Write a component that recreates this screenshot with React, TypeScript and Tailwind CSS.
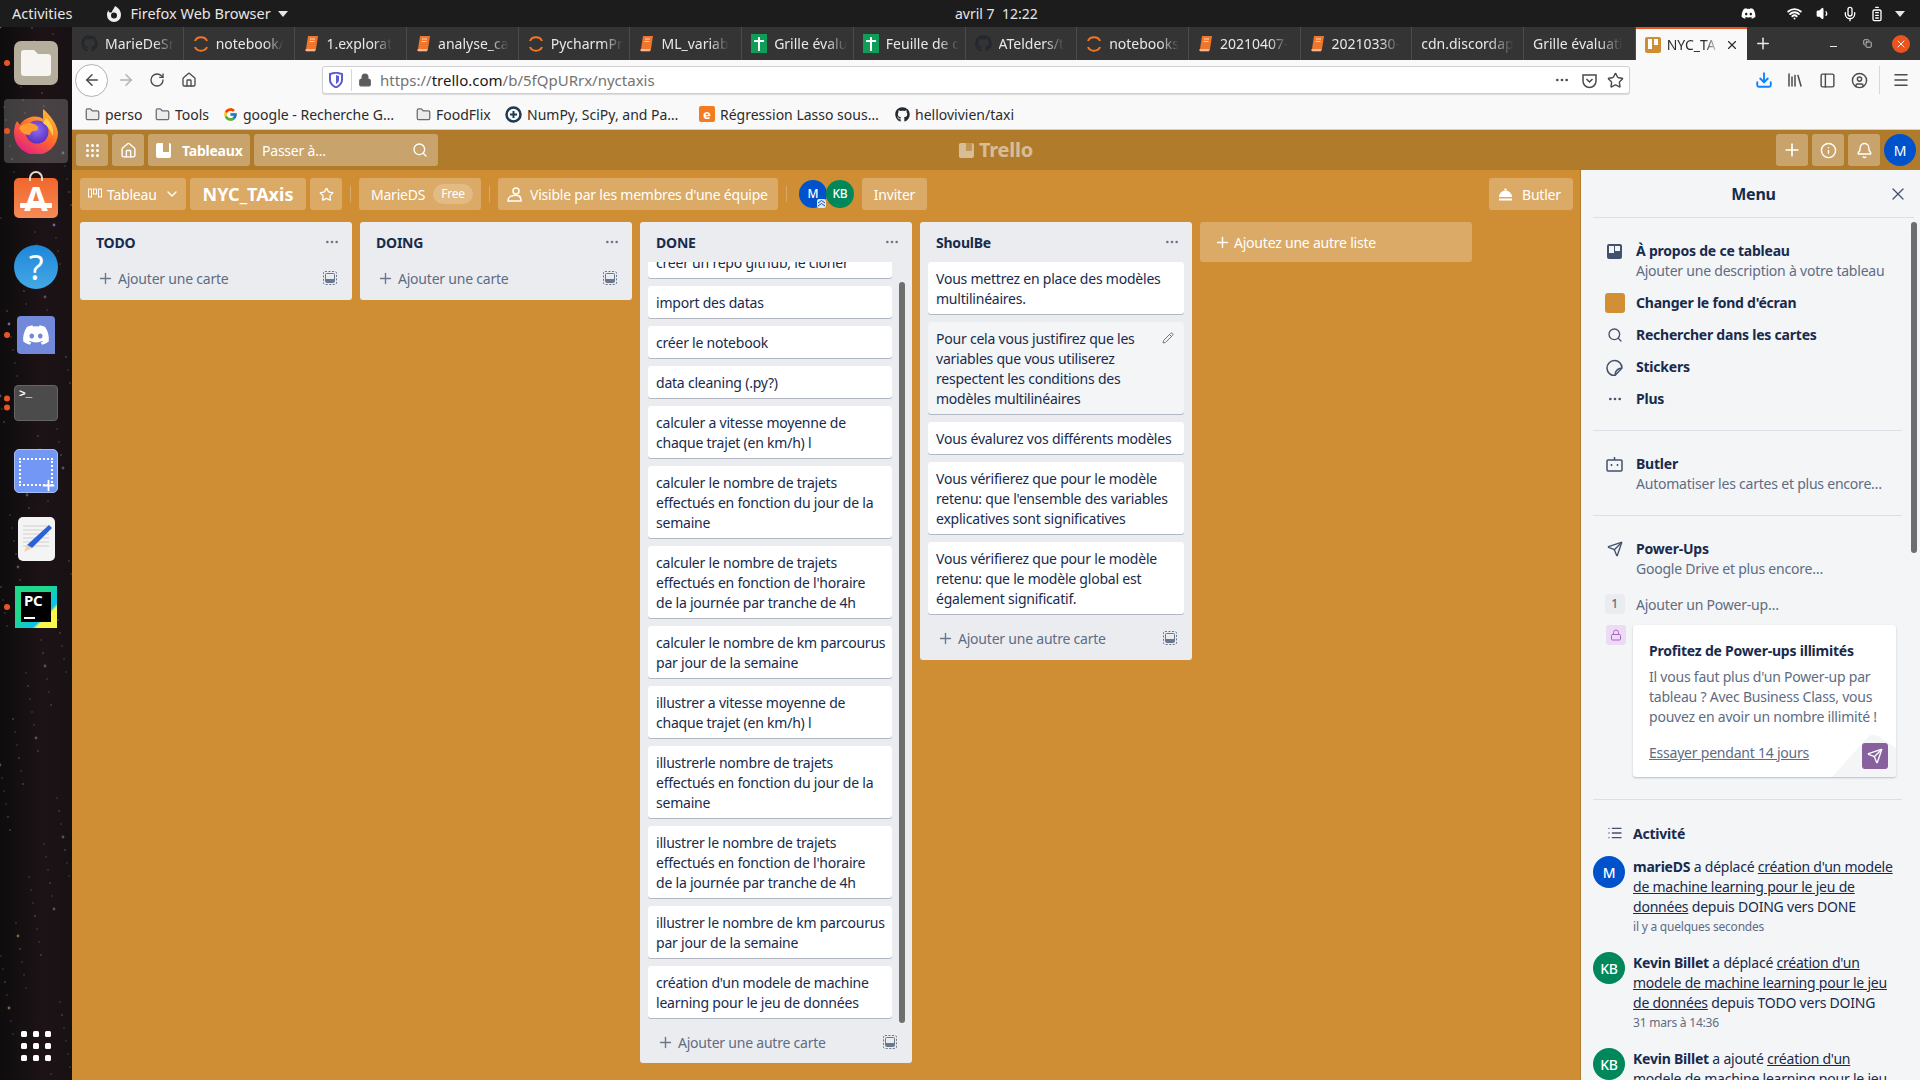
import {
  ArrowLeft, ArrowRight, Bell, ChevronDown, Copy, Ellipsis, Home, Info, Lock, Menu as MenuIcon, Pencil, Plus,
  RotateCw, Search, Send, Star, Volume1, Wifi, X, Mic, BatteryFull, CircleUser, Folder, Download, PanelLeft, Library, List,
} from 'lucide-react';
import { FaDiscord, FaGithub } from 'react-icons/fa6';
import { FcGoogle } from 'react-icons/fc';

const JupyterIcon = () => (
  <svg width="16" height="18" viewBox="0 0 16 18" className="shrink-0" fill="none" stroke="#f37626" strokeWidth="2">
    <path d="M2 6 C4 1 12 1 14 6" />
    <path d="M2 12 C4 17 12 17 14 12" />
  </svg>
);

const BookIcon = () => (
  <svg width="15" height="17" viewBox="0 0 15 17" className="shrink-0">
    <path d="M4 1h10l-2 13H2z" fill="#f0752d" />
    <path d="M2 14c-1 2 0 2 1 2h8l.5-2z" fill="#fff" stroke="#f0752d" />
    <path d="M6 4h5M5.500 6.500h5" stroke="#ffd2b0" />
  </svg>
);

const SheetIcon = () => (
  <span className="relative h-[19px] w-4 shrink-0 bg-[#0f9d58]">
    <span className="absolute left-[7px] top-[3px] h-[14px] w-0.5 bg-white" />
    <span className="absolute left-[3px] top-[6px] h-0.5 w-[10px] bg-white" />
  </span>
);

const GithubDark = () => <FaGithub className="h-[17px] w-[17px] shrink-0 text-[#23282e]" />;

const BookmarkFolder = () => <Folder className="h-[15px] w-[15px] fill-[#ececec] text-[#6b6b6b]" />;

const TemplateIcon = () => (
  <svg width="14" height="14" viewBox="0 0 14 14" className="ml-auto shrink-0" fill="none" stroke="#6b778c">
    <rect x="0.500" y="0.500" width="13" height="13" rx="1.500" strokeDasharray="2 1.500" />
    <rect x="2.500" y="2.500" width="9" height="9" rx="1" />
    <rect x="3" y="8" width="8" height="3" fill="#6b778c" stroke="none" />
  </svg>
);

const tabs = [
  { title: 'MarieDeSr', icon: <GithubDark /> },
  { title: 'notebook/', icon: <JupyterIcon /> },
  { title: '1.explorat', icon: <BookIcon /> },
  { title: 'analyse_ca', icon: <BookIcon /> },
  { title: 'PycharmPr', icon: <JupyterIcon /> },
  { title: 'ML_variab', icon: <BookIcon /> },
  { title: 'Grille évalu', icon: <SheetIcon /> },
  { title: 'Feuille de c', icon: <SheetIcon /> },
  { title: 'ATelders/t', icon: <GithubDark /> },
  { title: 'notebooks', icon: <JupyterIcon /> },
  { title: '20210407-', icon: <BookIcon /> },
  { title: '20210330-', icon: <BookIcon /> },
  { title: 'cdn.discordap', icon: null },
  { title: 'Grille évaluati', icon: null },
];

const bookmarks = [
  { label: 'perso', width: 'w-[70px]', icon: <BookmarkFolder /> },
  { label: 'Tools', width: 'w-[68px]', icon: <BookmarkFolder /> },
  { label: 'google - Recherche G…', width: 'w-[193px]', icon: <FcGoogle className="h-[15px] w-[15px]" /> },
  { label: 'FoodFlix', width: 'w-[89px]', icon: <BookmarkFolder /> },
  {
    label: 'NumPy, SciPy, and Pa…',
    width: 'w-[194px]',
    icon: (
      <svg width="17" height="17" viewBox="0 0 17 17">
        <circle cx="8.500" cy="8.500" r="7" fill="none" stroke="#1b3a55" strokeWidth="2.500" />
        <path d="M5 8.500h7M8.500 5v7" stroke="#1b3a55" strokeWidth="2" />
      </svg>
    ),
  },
  {
    label: 'Régression Lasso sous…',
    width: 'w-[196px]',
    icon: <span className="flex h-4 w-4 items-center justify-center rounded-[2px] bg-[#f47b20] text-[13px] font-bold leading-none text-white">e</span>,
  },
  { label: 'hellovivien/taxi', width: 'w-[130px]', icon: <FaGithub className="h-[15px] w-[15px] text-[#24292e]" /> },
];

const doneCards = [
  'créer un repo github, le cloner',
  'import des datas',
  'créer le notebook',
  'data cleaning (.py?)',
  'calculer a vitesse moyenne de\nchaque trajet (en km/h) l',
  'calculer le nombre de trajets\neffectués en fonction du jour de la\nsemaine',
  "calculer le nombre de trajets\neffectués en fonction de l'horaire\nde la journée par tranche de 4h",
  'calculer le nombre de km parcourus\npar jour de la semaine',
  'illustrer a vitesse moyenne de\nchaque trajet (en km/h) l',
  'illustrerle nombre de trajets\neffectués en fonction du jour de la\nsemaine',
  "illustrer le nombre de trajets\neffectués en fonction de l'horaire\nde la journée par tranche de 4h",
  'illustrer le nombre de km parcourus\npar jour de la semaine',
  "création d'un modele de machine\nlearning pour le jeu de données",
];

const shouldBeCards = [
  'Vous mettrez en place des modèles\nmultilinéaires.',
  'Pour cela vous justifirez que les\nvariables que vous utiliserez\nrespectent les conditions des\nmodèles multilinéaires',
  'Vous évalurez vos différents modèles',
  "Vous vérifierez que pour le modèle\nretenu: que l'ensemble des variables\nexplicatives sont significatives",
  'Vous vérifierez que pour le modèle\nretenu: que le modèle global est\négalement significatif.',
];

// fixed star field for the dock wallpaper
const stars = Array.from({ length: 170 }).map((_, i) => ({
  x: (i * 47) % 72,
  y: 27 + ((i * 283) % 1053),
  r: i % 9 === 0 ? 1.4 : 0.7,
  c: i % 5 === 0 ? '#8f8fd0' : i % 7 === 0 ? '#b08a60' : '#6d6d80',
}));

const AppSlot = ({ children, dots = 0, active = false }: { children: React.ReactNode; dots?: number; active?: boolean }) => (
  <div className="relative flex h-[68px] w-[72px] items-center justify-center">
    {active && <div className="absolute inset-x-1 inset-y-[2px] rounded-[4px] bg-white/20" />}
    {dots > 0 && (
      <div className="absolute left-1 top-1/2 flex -translate-y-1/2 flex-col gap-[3px]">
        {Array.from({ length: dots }).map((_, i) => (
          <span key={i} className="h-[6px] w-[6px] rounded-full bg-[#e95420]" />
        ))}
      </div>
    )}
    <div className="relative">{children}</div>
  </div>
);

const Dock = () => (
  <aside className="relative flex w-[72px] shrink-0 flex-col overflow-hidden bg-[linear-gradient(90deg,#0e0c0d,#1d1316_60%,#171113)] pt-[2px]">
    <svg className="absolute inset-0 h-full w-full" viewBox="0 27 72 1053" preserveAspectRatio="none">
      {stars.map((s, i) => (
        <circle key={i} cx={s.x} cy={s.y} r={s.r} fill={s.c} opacity="0.7" />
      ))}
    </svg>
    <AppSlot dots={1}>
      <div className="flex h-11 w-11 items-center justify-center rounded-[7px] bg-[#b5ae9c]">
        <svg width="32" height="28" viewBox="0 0 32 28">
          <path d="M1 4a3 3 0 0 1 3-3h10l4 4h10a3 3 0 0 1 3 3v16a3 3 0 0 1-3 3H4a3 3 0 0 1-3-3z" fill="#f7f5f1" />
        </svg>
      </div>
    </AppSlot>
    <AppSlot dots={1} active>
      <svg width="46" height="46" viewBox="0 0 46 46">
        <defs>
          <linearGradient id="ffBody" x1="0.8" y1="0" x2="0.2" y2="1">
            <stop offset="0" stopColor="#ffbd3a" />
            <stop offset="0.5" stopColor="#ff6a2b" />
            <stop offset="1" stopColor="#e3178a" />
          </linearGradient>
          <radialGradient id="ffCore" cx="0.5" cy="0.4" r="0.6">
            <stop offset="0" stopColor="#8e6cf0" />
            <stop offset="1" stopColor="#5b2fc0" />
          </radialGradient>
        </defs>
        <path d="M30 1c6 5 14 14 15 24a22 22 0 1 1-44 0c0-5 1-9 3-12l3 4c3-5 7-7 11-8 5-1 10 0 12 2 0-3 0-7 0-10z" fill="url(#ffBody)" />
        <circle cx="24" cy="24" r="11.500" fill="url(#ffCore)" />
        <path d="M6 20c4-5 10-6 15-4 6 2 5 7 0 7-2 0-4 2-4 4-6 0-9-3-11-7z" fill="#ff9a2e" />
        <path d="M33 10c5 4 8 10 7 18-2-5-5-10-10-13z" fill="#ffcf45" />
      </svg>
    </AppSlot>
    <AppSlot>
      <div className="relative -mt-[2px] flex h-[40px] w-11 flex-col items-center rounded-[5px] bg-[linear-gradient(#f1662b,#f58a58)] text-white">
        <span className="absolute -top-[7px] h-[10px] w-[14px] rounded-t-full border-2 border-b-0 border-[#e9d7c8]" />
        <span className="mt-[1px] text-[34px] font-bold leading-[38px]">A</span>
        <span className="absolute bottom-[10px] h-[5px] w-[32px] rounded-[1px] bg-white" />
      </div>
    </AppSlot>
    <AppSlot>
      <div className="flex h-11 w-11 items-center justify-center rounded-full bg-[linear-gradient(#1f86d8,#43a9e6)] text-[34px] leading-none text-white">?</div>
    </AppSlot>
    <AppSlot dots={1}>
      <div className="relative flex h-[38px] w-[38px] items-center justify-center rounded-[4px] rounded-br-none bg-[#7289da]">
        <FaDiscord className="h-7 w-7 text-white" />
      </div>
    </AppSlot>
    <AppSlot dots={2}>
      <div className="flex h-[36px] w-11 rounded-[4px] border border-[#656565] bg-[#4b4b4b] pl-1 pt-[2px] font-['Liberation_Mono',monospace] text-[11px] font-bold leading-3 text-white">
        &gt;_
      </div>
    </AppSlot>
    <AppSlot>
      <div className="relative h-11 w-11 rounded-[5px] border border-[#a9bdf5] bg-[#7297f5]">
        <div className="absolute inset-x-1 top-2 bottom-[6px] border-2 border-dotted border-white" />
        <Plus className="absolute -bottom-[2px] right-0 h-[17px] w-[17px] text-white" strokeWidth={2.500} />
      </div>
    </AppSlot>
    <AppSlot>
      <div className="flex h-11 w-[37px] items-center justify-center rounded-[5px] bg-[#f4f4f4]">
        <svg width="32" height="36" viewBox="0 0 32 36">
          <path d="M3 5h26M3 9h26M3 13h26M3 17h26M3 21h26M3 25h26" stroke="#d0d0d0" />
          <path d="M29 4l3 3-20 20-5-3z" fill="#2a62d9" />
          <path d="M7 24l5 3-8 4z" fill="#f3cfa8" />
        </svg>
      </div>
    </AppSlot>
    <AppSlot dots={1}>
      <div className="relative flex h-[42px] w-[42px] items-center justify-center bg-[linear-gradient(135deg,#21d789_40%,#07c3f2_70%,#fcf84a_75%)]">
        <div className="flex h-[30px] w-[30px] flex-col justify-between bg-black px-[3px] pb-[3px] text-[15px] font-bold leading-[17px] text-white">
          PC
          <span className="h-[2px] w-[11px] bg-white" />
        </div>
      </div>
    </AppSlot>
    <div className="relative mt-auto mb-[19px] ml-[21px] grid w-[30px] grid-cols-3 gap-x-[6px] gap-y-[6px]">
      {Array.from({ length: 9 }).map((_, i) => (
        <span key={i} className="h-[6px] w-[6px] rounded-[1.5px] bg-white" />
      ))}
    </div>
  </aside>
);

const TopBar = () => (
  <div className="relative flex h-[27px] items-center bg-[#1c1c1c] text-[14.5px] tracking-normal text-[#e6e6e6]">
    <span className="ml-3">Activities</span>
    <svg className="ml-[35px]" width="14" height="16" viewBox="0 0 14 16">
      <path d="M8 0c4 2 6 5 6 9a7 7 0 0 1-14 0c0-2 .6-3.500 1.500-5 0 3 2 3 3.500 2C5 4 7 3 8 0z" fill="#eee" />
      <circle cx="7" cy="9.500" r="3" fill="#1c1c1c" />
    </svg>
    <span className="ml-[9px]">Firefox Web Browser</span>
    <span className="ml-[7px] h-0 w-0 border-x-[5px] border-t-[6px] border-x-transparent border-t-[#e6e6e6]" />
    <span className="absolute left-[955px] top-[3px] whitespace-pre text-[14px]">avril 7  12:22</span>
    <div className="ml-auto flex items-center">
      <FaDiscord className="mr-[31px] h-[15px] w-[15px] text-white" />
      <Wifi className="mr-[14px] h-[15px] w-[15px] text-white" strokeWidth={3} />
      <Volume1 className="mr-[11px] h-[15px] w-[15px] fill-white text-white" />
      <Mic className="mr-[11px] h-4 w-4 text-white" />
      <BatteryFull className="mr-[10px] h-4 w-4 -rotate-90 text-white" />
      <span className="mr-[15px] h-0 w-0 border-x-[5px] border-t-[6px] border-x-transparent border-t-[#e6e6e6]" />
    </div>
  </div>
);

const TabStrip = () => (
  <div className="flex h-[33px] items-stretch bg-[#343434] text-[14px] tracking-normal text-[#e8e8e8]">
    {tabs.map((t) => (
      <div key={t.title} className="flex w-[111.7px] shrink-0 items-center gap-[7px] border-r border-[#4b4b4b] pl-[9px]">
        {t.icon}
        <span className="overflow-hidden whitespace-nowrap [mask-image:linear-gradient(to_right,black_72%,transparent)]">{t.title}</span>
      </div>
    ))}
    <div className="flex w-[111px] shrink-0 items-center gap-[6px] border-t-2 border-[#e95420] bg-[#f9f9fa] pl-[9px] text-[#2b2b2b]">
      <span className="relative h-4 w-4 shrink-0 rounded-[2px] bg-[#cf8e33]">
        <span className="absolute left-[3px] top-[2px] h-[10px] w-1 bg-white" />
        <span className="absolute left-[9px] top-[2px] h-[6px] w-1 bg-white" />
      </span>
      <span className="w-[52px] overflow-hidden whitespace-nowrap [mask-image:linear-gradient(to_right,black_72%,transparent)]">NYC_TA</span>
      <X className="h-[14px] w-[14px] shrink-0" />
    </div>
    <Plus className="ml-[7px] h-[33px] w-[18px] text-[#e8e8e8]" strokeWidth={2} />
    <div className="ml-auto flex items-center">
      <span className="mt-[6px] mr-[26px] h-px w-[7px] bg-[#e8e8e8]" />
      <Copy className="mr-[20px] h-[9px] w-[9px] text-[#e8e8e8]" />
      <span className="mr-[10px] flex h-[18px] w-[18px] items-center justify-center rounded-full bg-[#e95420]">
        <X className="h-3 w-3 text-white" />
      </span>
    </div>
  </div>
);

const NavBar = () => (
  <div className="flex h-[37px] items-center bg-[#f9f9fa] pt-[3px] tracking-normal text-[#4a4a4f]">
    <span className="ml-[3px] flex h-[33px] w-[33px] items-center justify-center rounded-full border border-[#b1b1b3] bg-white">
      <ArrowLeft className="h-[18px] w-[18px]" />
    </span>
    <ArrowRight className="ml-[9px] h-[18px] w-[18px] text-[#b1b1b3]" />
    <RotateCw className="ml-[14px] h-4 w-4" />
    <Home className="ml-4 h-4 w-4" />
    <div className="ml-[125px] flex h-7 w-[1308px] items-center rounded-[3px] border border-[#d0d0d2] bg-white shadow-[0_1px_1px_#0000001f]">
      <svg className="ml-[6px]" width="14" height="16" viewBox="0 0 14 16">
        <path d="M1 2l6-1.500L13 2v6c0 4-3 6-6 7.500C4 14 1 12 1 8z" fill="none" stroke="#5b5bd6" strokeWidth="2" />
        <path d="M7 3l3 1v4c0 2-1.500 3-3 4z" fill="#5b5bd6" />
      </svg>
      <span className="ml-[8px] h-[22px] w-px bg-[#d7d7db]" />
      <Lock className="ml-[6px] h-[14px] w-[14px] fill-[#5c5c5c] text-[#5c5c5c]" />
      <span className="ml-[8px] text-[15px] text-[#737373]">
        https://<span className="text-[#1a1a1a]">trello.com</span>/b/5fQpURrx/nyctaxis
      </span>
      <Ellipsis className="ml-auto mr-[11px] h-4 w-4" />
      <svg className="mr-[9px]" width="17" height="17" viewBox="0 0 17 17" fill="none" stroke="#4a4a4f" strokeWidth="1.500">
        <path d="M2 3h13v6a6.500 6.500 0 0 1-13 0z" />
        <path d="M5.500 7l3 3 3-3" />
      </svg>
      <Star className="mr-[5px] h-[17px] w-[17px]" />
    </div>
    <div className="ml-[125px] flex items-center">
      <Download className="h-[18px] w-[18px] text-[#0a84ff]" strokeWidth={2.500} />
      <Library className="ml-[13px] h-[18px] w-[18px]" />
      <PanelLeft className="ml-[15px] h-[17px] w-[17px]" />
      <CircleUser className="ml-[15px] h-[17px] w-[17px]" />
      <span className="ml-[11px] h-7 w-px bg-[#d7d7db]" />
      <MenuIcon className="ml-3 h-[18px] w-[18px]" />
    </div>
  </div>
);

const BookmarksBar = () => (
  <div className="flex h-[33px] items-center border-b border-[#cfcfcf] bg-[#f9f9fa] pl-[13px] pt-[2px] text-[14px] tracking-normal text-[#2b2b2b]">
    {bookmarks.map((b) => (
      <div key={b.label} className={`flex shrink-0 items-center gap-[5px] ${b.width}`}>
        {b.icon}
        <span className="whitespace-nowrap">{b.label}</span>
      </div>
    ))}
  </div>
);

const TrelloHeader = () => (
  <div className="relative flex h-10 items-center gap-1 bg-[#b07c2c] px-1 text-white">
    <button className="flex h-8 w-8 items-center justify-center rounded-[3px] bg-white/30">
      <span className="grid grid-cols-3 gap-[2px]">
        {Array.from({ length: 9 }).map((_, i) => (
          <span key={i} className="h-[3px] w-[3px] rounded-full bg-white" />
        ))}
      </span>
    </button>
    <button className="flex h-8 w-8 items-center justify-center rounded-[3px] bg-white/30">
      <Home className="h-[17px] w-[17px]" />
    </button>
    <button className="flex h-8 w-[102px] items-center rounded-[3px] bg-white/30 pl-2 text-[14px] font-bold">
      <span className="relative mr-[11px] h-[15px] w-[15px] rounded-[2px] bg-white">
        <span className="absolute left-[7px] top-0 h-[9px] w-[6px] bg-[#c8a36b]" />
      </span>
      Tableaux
    </button>
    <div className="flex h-8 w-[184px] items-center justify-between rounded-[3px] bg-white/30 pl-2 pr-[10px] text-[14px]">
      <span>Passer à...</span>
      <Search className="h-4 w-4" />
    </div>
    <div className="absolute left-1/2 top-2 flex -translate-x-1/2 items-center gap-[5px] text-[20px] font-bold leading-6 text-white/50">
      <span className="relative h-[15px] w-[15px] rounded-[2px] bg-white/50">
        <span className="absolute left-[7px] top-0 h-[8px] w-[6px] bg-[#b07c2c]/60" />
      </span>
      Trello
    </div>
    <div className="ml-auto flex items-center gap-1">
      <button className="flex h-8 w-8 items-center justify-center rounded-[3px] bg-white/30">
        <Plus className="h-5 w-5" />
      </button>
      <button className="flex h-8 w-8 items-center justify-center rounded-[3px] bg-white/30">
        <Info className="h-[17px] w-[17px]" />
      </button>
      <button className="flex h-8 w-8 items-center justify-center rounded-[3px] bg-white/30">
        <Bell className="h-[17px] w-[17px]" />
      </button>
      <span className="flex h-8 w-8 items-center justify-center rounded-full bg-[#0052cc] text-[14px]">M</span>
    </div>
  </div>
);

const BoardHeader = () => (
  <div className="flex h-8 items-center text-[14px] text-white">
    <button className="flex h-8 w-[106px] items-center rounded-[3px] bg-white/25 pl-2">
      <svg className="mr-[5px]" width="14" height="12" viewBox="0 0 14 12" fill="none" stroke="#fff">
        <rect x="0.500" y="1" width="3" height="8" />
        <rect x="5.500" y="1" width="3" height="5" />
        <rect x="10.500" y="1" width="3" height="8" />
      </svg>
      Tableau
      <ChevronDown className="ml-auto mr-[6px] h-4 w-4" />
    </button>
    <button className="ml-1 flex h-8 w-[116px] items-center justify-center rounded-[3px] bg-white/25 text-[18px] font-bold tracking-normal">NYC_TAxis</button>
    <button className="ml-1 flex h-8 w-8 items-center justify-center rounded-[3px] bg-white/25">
      <Star className="h-[15px] w-[15px]" />
    </button>
    <span className="ml-2 h-4 w-px bg-white/25" />
    <button className="ml-2 flex h-8 w-[122px] items-center rounded-[3px] bg-white/25 pl-3">
      MarieDS
      <span className="ml-2 rounded-full bg-white/20 px-2 text-[12px] leading-[20px]">Free</span>
    </button>
    <span className="ml-2 h-4 w-px bg-white/25" />
    <button className="ml-2 flex h-8 w-[280px] items-center rounded-[3px] bg-white/25 pl-[9px]">
      <svg className="mr-2" width="15" height="15" viewBox="0 0 15 15" fill="none" stroke="#fff" strokeWidth="1.500">
        <circle cx="9" cy="4" r="3" />
        <path d="M1 14c0-3 2-5 4-5 1-1 6-1 7 0 2 1 2 3 2 5z" />
      </svg>
      <span className="whitespace-nowrap">Visible par les membres d'une équipe</span>
    </button>
    <span className="ml-2 h-4 w-px bg-white/25" />
    <div className="relative ml-3 flex">
      <span className="flex h-7 w-7 items-center justify-center rounded-full bg-[#0052cc] text-[12px] font-medium">M</span>
      <span className="-ml-px flex h-7 w-7 items-center justify-center rounded-full bg-[#00875a] text-[12px] font-medium">KB</span>
      <svg className="absolute left-[18px] top-[19px]" width="9" height="9" viewBox="0 0 9 9" fill="none" stroke="#0052cc">
        <rect width="9" height="9" rx="2" fill="#dfe8f7" stroke="none" />
        <path d="M1 4l3.500-2.500L8 4M1 7l3.500-2.500L8 7" />
      </svg>
    </div>
    <button className="ml-2 flex h-8 w-[65px] items-center justify-center rounded-[3px] bg-white/25">Inviter</button>
    <button className="ml-auto mr-[7px] flex h-8 w-[84px] items-center rounded-[3px] bg-white/25 pl-[9px]">
      <svg className="mr-[9px]" width="15" height="15" viewBox="0 0 15 15" fill="#fff">
        <path d="M1 10a6.500 6.500 0 0 1 13 0z" />
        <rect x="6.500" y="1.500" width="2" height="2" />
        <rect x="1" y="11.500" width="13" height="2" />
      </svg>
      Butler
    </button>
  </div>
);

const ListHeader = ({ title }: { title: string }) => (
  <div className="flex h-10 shrink-0 items-center justify-between pl-4 pr-3 text-[14px] font-bold text-[#172b4d]">
    {title}
    <Ellipsis className="h-4 w-4 text-[#6b778c]" />
  </div>
);

const ListFooter = ({ label }: { label: string }) => (
  <div className="mx-2 flex h-8 shrink-0 items-center pl-[11px] pr-[7px] text-[14px] text-[#5e6c84]">
    <Plus className="mr-[2px] h-[17px] w-[17px] -translate-x-[2px] text-[#6b778c]" />
    {label}
    <TemplateIcon />
  </div>
);

const Card = ({ text, hovered, className = '' }: { text: string; hovered?: boolean; className?: string }) => (
  <div
    className={`relative shrink-0 whitespace-pre rounded-[3px] px-2 pb-[5px] pt-[7px] text-[14px] leading-5 text-[#172b4d] shadow-[0_1px_0_#091e4240] ${hovered ? 'bg-[#f4f5f7]' : 'bg-white'} ${className}`}
  >
    {text}
    {hovered && <Pencil className="absolute right-[10px] top-[10px] h-[12px] w-[12px] text-[#6b778c]" />}
  </div>
);

const Lists = () => (
  <div className="mt-3 flex items-start gap-2">
    <section className="w-[272px] rounded-[3px] bg-[#ebecf0] pb-1.5">
      <ListHeader title="TODO" />
      <ListFooter label="Ajouter une carte" />
    </section>
    <section className="w-[272px] rounded-[3px] bg-[#ebecf0] pb-1.5">
      <ListHeader title="DOING" />
      <ListFooter label="Ajouter une carte" />
    </section>
    <section className="relative flex h-[841px] w-[272px] flex-col rounded-[3px] bg-[#ebecf0] pb-1">
      <ListHeader title="DONE" />
      <div className="flex h-[761px] flex-col gap-2 overflow-hidden pl-2 pr-5 pt-0">
        {doneCards.map((c, i) => (
          <Card key={c} text={c} className={i === 0 ? '-mt-4' : ''} />
        ))}
      </div>
      <div className="absolute left-[259px] top-[60px] h-[741px] w-[6px] rounded-full bg-[#6e6e6e]" />
      <div className="mt-[3px]">
        <ListFooter label="Ajouter une autre carte" />
      </div>
    </section>
    <section className="w-[272px] rounded-[3px] bg-[#ebecf0] pb-1.5">
      <ListHeader title="ShoulBe" />
      <div className="flex flex-col gap-2 px-2">
        {shouldBeCards.map((c, i) => (
          <Card key={c} text={c} hovered={i === 1} />
        ))}
      </div>
      <div className="mt-2">
        <ListFooter label="Ajouter une autre carte" />
      </div>
    </section>
    <div className="flex h-10 w-[272px] items-center rounded-[3px] bg-white/25 pl-[14px] text-[14px] text-white">
      <Plus className="mr-[3px] h-[17px] w-[17px]" />
      Ajoutez une autre liste
    </div>
  </div>
);

const MenuRow = ({ icon, title, sub, className = '' }: { icon: React.ReactNode; title: string; sub?: string; className?: string }) => (
  <div className={`flex ${className}`}>
    <div className="flex h-5 w-[43px] shrink-0 items-center justify-center">{icon}</div>
    <div>
      <div className="h-5 text-[14px] font-bold leading-5 text-[#172b4d]">{title}</div>
      {sub && <div className="text-[14px] leading-5 text-[#5e6c84]">{sub}</div>}
    </div>
  </div>
);

const ActivityItem = ({ initials, color, who, action, link, rest, time }: { initials: string; color: string; who: string; action: string; link: string; rest: string; time: string }) => (
  <div className="flex h-[96px]">
    <span className={`flex h-8 w-8 shrink-0 items-center justify-center rounded-full text-[14px] font-medium text-white ${color}`}>{initials}</span>
    <div className="ml-2 mt-px w-[262px]">
      <p className="whitespace-pre text-[14px] leading-5 text-[#172b4d]">
        <b>{who}</b> {action} <span className="underline">{link}</span> {rest}
      </p>
      <p className="text-[12px] leading-5 text-[#5e6c84]">{time}</p>
    </div>
  </div>
);

const SidePanel = () => (
  <aside className="flex w-[340px] shrink-0 flex-col overflow-hidden border-l border-[#b07c2c] bg-[#f4f5f7]">
    <div className="relative ml-3 mr-[6px] flex h-12 shrink-0 items-center justify-center border-b border-[#dcdfe5] text-[16px] font-bold text-[#172b4d]">
      Menu
      <X className="absolute right-[6px] h-5 w-5 text-[#42526e]" strokeWidth={1.500} />
    </div>
    <div className="relative flex-1 overflow-hidden px-3 pt-4">
      <div className="absolute left-[330px] top-1 h-[331px] w-[6px] rounded-full bg-[#6e6e6e]" />
      <div className="pb-[6px] pt-[7px]">
        <MenuRow
          title="À propos de ce tableau"
          sub="Ajouter une description à votre tableau"
          icon={
            <span className="relative h-[15px] w-[15px] rounded-[2px] bg-[#42526e]">
              <span className="absolute left-[2px] top-[2px] h-[7px] w-[5px] bg-[#f4f5f7]" />
              <span className="absolute left-[8px] top-[2px] h-[5px] w-[5px] bg-[#f4f5f7]" />
            </span>
          }
        />
      </div>
      <MenuRow className="h-8 items-center" title="Changer le fond d'écran" icon={<span className="h-5 w-5 rounded-[3px] bg-[#d29034]" />} />
      <MenuRow className="h-8 items-center" title="Rechercher dans les cartes" icon={<Search className="h-4 w-4 text-[#42526e]" />} />
      <MenuRow
        className="h-8 items-center"
        title="Stickers"
        icon={
          <svg width="17" height="17" viewBox="0 0 17 17" fill="none" stroke="#42526e" strokeWidth="1.500">
            <path d="M16 9a7.500 7.500 0 1 0-7 7.500z" />
            <path d="M9 16.500c0-4 2-7 7-7.500" />
          </svg>
        }
      />
      <MenuRow className="h-8 items-center" title="Plus" icon={<Ellipsis className="h-4 w-4 text-[#42526e]" />} />
      <div className="mt-[15px] h-px w-[309px] bg-[#dcdfe5]" />
      <MenuRow
        className="mt-[23px]"
        title="Butler"
        sub="Automatiser les cartes et plus encore…"
        icon={
          <svg width="17" height="15" viewBox="0 0 17 15" fill="none" stroke="#42526e" strokeWidth="1.500">
            <rect x="1" y="3" width="15" height="11" rx="1" />
            <path d="M8.500 0v3M5.500 7v2M11.500 7v2" />
          </svg>
        }
      />
      <div className="mt-[21px] h-px w-[309px] bg-[#dcdfe5]" />
      <MenuRow className="mt-[23px]" title="Power-Ups" sub="Google Drive et plus encore…" icon={<Send className="h-4 w-4 text-[#42526e]" />} />
      <div className="mt-[9px] flex h-8 items-center">
        <div className="flex w-[43px] justify-center">
          <span className="flex h-5 w-5 items-center justify-center rounded-[3px] bg-[#ebecf0] text-[12px] font-medium text-[#5e6c84]">1</span>
        </div>
        <span className="text-[14px] text-[#5e6c84]">Ajouter un Power-up…</span>
      </div>
      <div className="mt-[5px] flex">
        <div className="flex w-10 shrink-0 justify-center pl-[5px]">
          <span className="flex h-5 w-5 items-center justify-center rounded-[3px] bg-[#eddbf4]">
            <Lock className="h-3 w-3 text-[#a865c9]" />
          </span>
        </div>
        <div className="relative h-[152px] w-[263px] overflow-hidden rounded-[3px] bg-white p-4 shadow-[0_1px_2px_#091e4240]">
          <div className="h-5 text-[14px] font-bold leading-5 text-[#172b4d]">Profitez de Power-ups illimités</div>
          <p className="mt-1.5 whitespace-pre text-[14px] leading-5 text-[#5e6c84]">
            {"Il vous faut plus d'un Power-up par\ntableau ? Avec Business Class, vous\npouvez en avoir un nombre illimité !"}
          </p>
          <a className="mt-4 block text-[14px] leading-5 text-[#5e6c84] underline">Essayer pendant 14 jours</a>
          <svg className="absolute bottom-0 right-0" width="64" height="44" viewBox="0 0 64 44">
            <path d="M0 44 L36 4 Q40 0 46 3 L64 15 V44z" fill="#f4f5f7" />
          </svg>
          <span className="absolute bottom-2 right-2 flex h-[26px] w-[26px] items-center justify-center rounded-[3px] bg-[#89609e]">
            <Send className="h-4 w-4 text-white" />
          </span>
        </div>
      </div>
      <div className="mt-[22px] h-px w-[309px] bg-[#dcdfe5]" />
      <div className="mt-[23px] flex h-5 items-center">
        <div className="flex w-10 justify-center pl-[3px]">
          <List className="h-4 w-4 text-[#42526e]" />
        </div>
        <span className="text-[14px] font-bold text-[#172b4d]">Activité</span>
      </div>
      <div className="mt-[13px]">
        <ActivityItem
          initials="M"
          color="bg-[#0052cc]"
          who="marieDS"
          action="a déplacé"
          link={"création d'un modele\nde machine learning pour le jeu de\ndonnées"}
          rest="depuis DOING vers DONE"
          time="il y a quelques secondes"
        />
        <ActivityItem
          initials="KB"
          color="bg-[#00875a]"
          who="Kevin Billet"
          action="a déplacé"
          link={"création d'un\nmodele de machine learning pour le jeu\nde données"}
          rest="depuis TODO vers DOING"
          time="31 mars à 14:36"
        />
        <ActivityItem
          initials="KB"
          color="bg-[#00875a]"
          who="Kevin Billet"
          action="a ajouté"
          link={"création d'un\nmodele de machine learning pour le jeu"}
          rest=""
          time=""
        />
      </div>
    </div>
  </aside>
);

export default function App() {
  return (
    <div className="flex h-[1080px] w-[1920px] flex-col overflow-hidden tracking-[-0.22px] [font-family:'Noto_Sans',sans-serif]">
      <TopBar />
      <div className="flex min-h-0 flex-1">
        <Dock />
        <div className="flex min-w-0 flex-1 flex-col">
          <TabStrip />
          <NavBar />
          <BookmarksBar />
          <TrelloHeader />
          <div className="flex min-h-0 flex-1 bg-[#cf8e33]">
            <main className="flex-1 pl-2 pt-2">
              <BoardHeader />
              <Lists />
            </main>
            <SidePanel />
          </div>
        </div>
      </div>
    </div>
  );
}
